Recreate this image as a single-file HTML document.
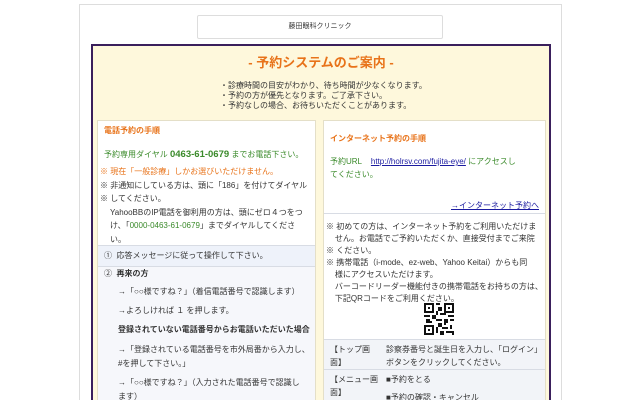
<!DOCTYPE html>
<html><head><meta charset="utf-8">
<style>
*{margin:0;padding:0;box-sizing:border-box}
html,body{width:640px;height:400px;overflow:hidden}
body{background:#fff;font-family:"Liberation Sans","Noto Sans CJK JP",sans-serif;font-size:8px;color:#333;position:relative}
.outer{position:absolute;left:79px;top:4px;width:483px;height:396px;border:1px solid #ddd;border-bottom:none;background:#fff}
.logo{position:absolute;left:197px;top:15px;width:246px;height:24px;border:1px solid #ddd;border-radius:2px;text-align:center;line-height:22px;font-size:7px;color:#333}
.main{position:absolute;left:91px;top:44px;width:460px;height:356px;border:2px solid #3a1f5c;border-bottom:none;background:#fef8dc;overflow:hidden}
h1{position:absolute;left:0;width:100%;top:6px;text-align:center;font-size:13px;color:#e8731a;font-weight:bold}
.intro{position:absolute;left:127px;top:35px;font-size:8px;line-height:10px;color:#333}
.panel{position:absolute;background:#fff;border:1px solid #e4dfc8;border-bottom:none;overflow:hidden}
.l{left:4px;top:74px;width:219px;height:280px}
.r{left:230px;top:74px;width:223px;height:280px}
.p{position:absolute;left:6px;line-height:12.5px;white-space:nowrap}
.or{color:#e8731a;font-weight:bold}
.gr{color:#3a8a2a}
.row{position:absolute;left:0;width:100%;border-top:1px solid #d8dce4;overflow:hidden}
a{color:#1a1aa0}
</style></head><body>
<div class="outer"></div>
<div class="logo">藤田眼科クリニック</div>
<div class="main">
<h1>- 予約システムのご案内 -</h1>
<div class="intro">・診療時間の目安がわかり、待ち時間が少なくなります。<br>・予約の方が優先となります。ご了承下さい。<br>・予約なしの場合、お待ちいただくことがあります。</div>

<div class="panel l">
<div class="p or" style="top:4px">電話予約の手順</div>
<div class="p gr" style="top:28px">予約専用ダイヤル <b style="font-size:9.5px">0463-61-0679</b> までお電話下さい。</div>
<div class="p" style="top:44px;left:2px;line-height:13.6px"><span style="color:#e8731a">※ 現在「一般診療」しかお選びいただけません。</span><br>※ 非通知にしている方は、頭に「186」を付けてダイヤル<br>※ してください。<br><span style="padding-left:10px">YahooBBのIP電話を御利用の方は、頭にゼロ４つをつ</span><br><span style="padding-left:10px">け、「<span class="gr">0000-0463-61-0679</span>」までダイヤルしてくださ</span><br><span style="padding-left:10px">い。</span></div>
<div class="row" style="top:124px;height:21px;background:#eef2fa"><div class="p" style="top:4px">①&nbsp; 応答メッセージに従って操作して下さい。</div></div>
<div class="row" style="top:145px;height:135px;background:#f6f7fb">
<div class="p" style="top:1px">②&nbsp; <b>再来の方</b></div>
<div class="p" style="top:19px;left:20px">→「○○様ですね？」（着信電話番号で認識します）</div>
<div class="p" style="top:38px;left:20px">→よろしければ １ を押します。</div>
<div class="p" style="top:57px;left:20px"><b>登録されていない電話番号からお電話いただいた場合</b></div>
<div class="p" style="top:76px;left:20px;line-height:13.5px">→「登録されている電話番号を市外局番から入力し、<br>#を押して下さい。」</div>
<div class="p" style="top:109px;left:20px;line-height:13.5px">→「○○様ですね？」（入力された電話番号で認識し<br>ます）</div>
</div>
</div>

<div class="panel r">
<div class="p or" style="top:12px">インターネット予約の手順</div>
<div class="p gr" style="top:35px">予約URL&nbsp;&nbsp;&nbsp; <a href="#" style="text-decoration:underline">http://holrsv.com/fujita-eye/</a> にアクセスし<br>てください。</div>
<div class="p" style="top:79px;right:6px;left:auto"><a href="#">→インターネット予約へ</a></div>
<div class="row" style="top:92px;height:1px"></div>
<div class="p" style="top:100px;left:2px;line-height:12px">※ 初めての方は、インターネット予約をご利用いただけま<br>&nbsp;&nbsp;&nbsp; せん。お電話でご予約いただくか、直接受付までご来院<br>※ ください。<br>※ 携帯電話（i-mode、ez-web、Yahoo Keitai）からも同<br>&nbsp;&nbsp;&nbsp; 様にアクセスいただけます。<br>&nbsp;&nbsp;&nbsp; バーコードリーダー機能付きの携帯電話をお持ちの方は、<br>&nbsp;&nbsp;&nbsp; 下記QRコードをご利用ください。</div>
<svg style="position:absolute;left:100px;top:182px" width="30" height="32" viewBox="0 0 15 16" shape-rendering="crispEdges"><rect width="15" height="16" fill="#fff"/><path d="M0 0h5v5H0zM10 0h5v5h-5zM0 11h5v5H0z" fill="#111"/><path d="M1 1h3v3H1zM11 1h3v3h-3zM1 12h3v3H1z" fill="#fff"/><path d="M2 2h1v1H2zM12 2h1v1h-1zM2 13h1v1H2z" fill="#111"/><path d="M6 0h2v1H6zM7 2h2v2H7zM6 4h1v2H6zM0 6h3v1H0zM4 6h2v2H4zM8 5h3v1H8zM12 6h3v1h-3zM1 8h2v2H1zM6 8h3v1H6zM10 8h2v2h-2zM13 8h2v1h-2zM7 10h2v2H7zM6 12h1v3H6zM9 12h3v1H9zM13 11h1v2h-1zM8 14h2v2H8zM11 14h3v1h-3zM10 10h1v1h-1zM3 9h1v1H3zM14 14h1v2h-1z" fill="#111"/></svg>
<div class="row" style="top:218px;height:30px;background:#f2f4f8"><div class="p" style="top:4px;white-space:normal;width:48px">【トップ画面】</div><div class="p" style="top:4px;left:62px">診察券番号と誕生日を入力し、「ログイン」<br>ボタンをクリックしてください。</div></div>
<div class="row" style="top:248px;height:32px;background:#f2f4f8"><div class="p" style="top:4px;white-space:normal;width:52px">【メニュー画面】</div><div class="p" style="top:4px;left:62px">■予約をとる</div><div class="p" style="top:22px;left:62px">■予約の確認・キャンセル</div></div>
</div>
</div>
</body></html>
